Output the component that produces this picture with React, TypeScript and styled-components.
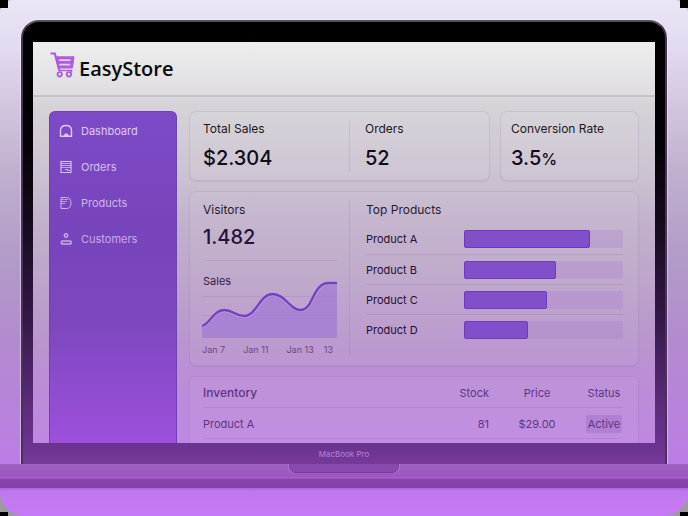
import React from "react";
import styled, { createGlobalStyle } from "styled-components";

const GlobalStyle = createGlobalStyle`
  *, *::before, *::after { box-sizing: border-box; }
  html { background: #9b9b9b; }
  body {
    margin: 0;
    font-family: Inter, "Liberation Sans", sans-serif;
    font-size: 12px;
    line-height: 16px;
    color: #17131b;
  }
  h1, h2, p, ul, dl, dd, figure { margin: 0; padding: 0; }
  ul { list-style: none; }
`;

const Stage = styled.div`
  position: relative;
  min-height: 100vh;
  padding-top: 20px;
  overflow: hidden;
  border-radius: 12px 12px 24px 24px;
  background: linear-gradient(
    #ece5f7 0px,
    #e2daee 50px,
    #d1c5de 110px,
    #bfafce 175px,
    #b29bc8 260px,
    #b38acf 340px,
    #bb7fe3 450px,
    #c077ee 490px,
    #c67af6 516px
  );
`;

const Backdrop = styled.main`
  background: #9b9b9b;
`;

const Corner = styled.span<{ $v: "top" | "bottom"; $h: "left" | "right" }>`
  position: absolute;
  ${(p) => p.$v}: 0;
  ${(p) => p.$h}: 0;
  width: 8px;
  height: ${(p) => (p.$v === "top" ? 8 : 4)}px;
  background: #000;
`;

const Lid = styled.section`
  margin: 0 21px;
  padding: 20px 10px 0;
  border: 2px solid #55505c;
  border-bottom: 0;
  border-color: #55505c #4b3058 transparent;
  border-radius: 18px 18px 0 0;
  box-shadow: 0 0 1px 1px rgba(255, 255, 255, 0.4);
  background: linear-gradient(
    #000 0px,
    #020103 110px,
    #150a1c 200px,
    #35184a 300px,
    #5b2b79 380px,
    #6c3390 424px,
    #773a9c 444px
  );
`;

const Screen = styled.div`
  height: 401px;
  display: flex;
  flex-direction: column;
  overflow: hidden;
  background: linear-gradient(
    #eeeeee 0px,
    #dfdde1 52px,
    #d6d3d8 62px,
    #cdc5d2 125px,
    #c1b0cb 185px,
    #bda6ca 235px,
    #b995cd 300px,
    #bb8cd8 350px,
    #bf88e2 401px
  );
`;

const Header = styled.header`
  flex: none;
  display: flex;
  gap: 4px;
  height: 55px;
  padding: 10px 17px 0;
  border-bottom: 2px solid #c6c4c9;
`;

const CartIcon = styled.svg`
  width: 25px;
  height: 26px;
`;

const Brand = styled.h1`
  font-family: "Open Sans", "Noto Sans", sans-serif;
  font-size: 20px;
  line-height: 34px;
  font-weight: 600;
  color: #0b0a0c;
`;

const Workspace = styled.div`
  flex: 1;
  display: grid;
  grid-template-columns: 128px minmax(0, 1fr);
  gap: 12px;
  padding: 14px 16px 0;
`;

const Sidebar = styled.nav`
  padding: 10px 9px;
  border: 1px solid #7040b8;
  border-bottom: 0;
  border-radius: 6px 6px 0 0;
  background: linear-gradient(#7e4bc8 0px, #7744bb 120px, #7d47bf 210px, #9d50dc 332px);
`;

const NavItem = styled.a<{ $dim: number }>`
  display: flex;
  align-items: center;
  gap: 8px;
  height: 18px;
  margin-bottom: 18px;
  font-size: 11px;
  color: #e0c8f5;
  opacity: ${(p) => p.$dim};
  text-decoration: none;
`;

const NavIcon = styled.svg`
  width: 14px;
  height: 14px;
  fill: none;
  stroke: currentColor;
  stroke-width: 1.2;
`;

const Content = styled.div`
  display: flex;
  flex-direction: column;
  gap: 10px;
`;

const CardRow = styled.div`
  display: grid;
  grid-template-columns: 301fr 139fr;
  gap: 10px;
`;

const Card = styled.section<{ $open?: boolean }>`
  display: flex;
  flex: ${(p) => (p.$open ? 1 : "none")};
  border: 1px solid rgba(105, 70, 130, 0.13);
  border-bottom-width: ${(p) => (p.$open ? 0 : 1)}px;
  border-radius: ${(p) => (p.$open ? "6px 6px 0 0" : "7px")};
  background: rgba(255, 255, 255, 0.05);
  box-shadow: 0 1px 1px rgba(80, 40, 110, 0.07);
`;

const Metric = styled.dl<{ $wide?: boolean }>`
  flex: ${(p) => (p.$wide ? "0 0 159px" : "1")};
  margin: 8px 0;
  padding: ${(p) => (p.$wide ? "1px 13px 0" : "1px 10px 0")};
  & + & {
    padding-left: 15px;
    border-left: 1px solid rgba(105, 70, 130, 0.13);
  }
`;

const Label = styled.dt`
  color: #1d1822;
`;

const Value = styled.dd`
  margin-top: 8px;
  font-size: 20px;
  line-height: 26px;
  font-weight: 500;
  color: #120c18;
`;

const Unit = styled.span`
  font-size: 16px;
`;

const VisitPane = styled.div`
  flex: 0 0 159px;
  margin: 8px 0 7px;
  padding: 2px 12px 0 13px;
`;

const VisitStats = styled.dl`
  height: 59px;
  border-bottom: 1px solid rgba(105, 70, 130, 0.12);
  dt { color: #281a34; }
  dd { margin-top: 6px; color: #26123a; }
`;

const ChartFigure = styled.figure`
  display: grid;
  margin: 12px 0 0 -1px;
`;

const ChartTitle = styled.figcaption`
  grid-area: 1 / 1;
  padding-left: 1px;
  font-size: 11px;
  color: #321b47;
`;

const Chart = styled.svg`
  grid-area: 1 / 1;
  width: 100%;
  height: 57px;
  margin-top: 8px;
`;

const AxisLabels = styled.div`
  display: flex;
  justify-content: space-between;
  margin: 4px 0 0 -1px;
  padding-right: 4px;
  font-size: 9px;
  color: #6b4880;
  span:last-child { margin-left: -8px; }
`;

const ProductsPane = styled.div`
  flex: 1;
  margin: 8px 0;
  padding: 2px 15px 0 16px;
  border-left: 1px solid rgba(105, 70, 130, 0.13);
`;

const PaneTitle = styled.h2`
  font-size: 12px;
  font-weight: 400;
  color: #281a34;
`;

const ProductList = styled.ul`
  padding-top: 6px;
`;

const ProductRow = styled.li`
  display: grid;
  grid-template-columns: 98px minmax(0, 1fr);
  align-items: center;
  height: 30px;
  font-size: 11px;
  color: #240f36;
  & + & { border-top: 1px solid rgba(105, 70, 130, 0.14); }
`;

const Track = styled.div`
  height: 18px;
  border-radius: 2px;
  background: rgba(160, 110, 210, 0.22);
`;

const Fill = styled.div`
  height: 100%;
  border: 1px solid #6c3cbc;
  border-radius: 2px;
  background: #814fca;
`;

const Inventory = styled.table`
  width: 100%;
  margin: 0 15px 0 13px;
  align-self: flex-start;
  border-collapse: collapse;
  table-layout: fixed;
  color: #603583;
  tr { border-bottom: 1px solid rgba(105, 50, 140, 0.12); }
`;

const Col = styled.col<{ $w?: number }>`
  width: ${(p) => (p.$w ? `${p.$w}px` : "auto")};
`;

const Head = styled.th<{ $align?: "left" | "right" | "center" }>`
  height: 30px;
  padding: 2px 0 0;
  text-align: ${(p) => p.$align ?? "center"};
  font-size: ${(p) => (p.$align === "left" ? 12 : 11)}px;
  font-weight: ${(p) => (p.$align === "left" ? 500 : 400)};
  white-space: nowrap;
`;

const Cell = styled.td<{ $align?: "left" | "right" | "center" }>`
  height: 31px;
  padding: 2px 0 0;
  text-align: ${(p) => p.$align ?? "center"};
  font-size: 11px;
  white-space: nowrap;
`;

const Badge = styled.span`
  display: inline-block;
  padding: 1px 2px;
  border-radius: 2px;
  background: rgba(130, 80, 180, 0.24);
`;

const Model = styled.p`
  padding: 6px 0 5px;
  text-align: center;
  font-size: 8px;
  line-height: 10px;
  color: #b484d2;
`;

const Deck = styled.div`
  height: 26px;
  display: flex;
  justify-content: center;
  align-items: flex-start;
  border-bottom: 2px solid #b069dc;
  background: linear-gradient(
    #a968cb 0px,
    #9f60c2 1px,
    #9c57c0 13px,
    #aa69ce 14px,
    #8a44ad 15px,
    #843fa8 24px
  );
`;

const Notch = styled.div`
  width: 110px;
  height: 9px;
  border: 1px solid #7c3d9d;
  border-top: 0;
  border-radius: 0 0 7px 7px;
  background: #8a49ad;
  box-shadow: 1px 0 0 #b27bd0, -1px 0 0 #b27bd0;
`;

const navItems = [
  {
    label: "Dashboard",
    dim: 1,
    icon: (
      <>
        <path d="M1.500 12.300V6.500C1.500 3.200 4 1.500 7 1.500s5.500 1.700 5.500 5v5.800z" strokeWidth="1.400" />
        <path d="M5 12v-1.500h1V9.500h2.500v1H9.500V12z" fill="currentColor" stroke="none" />
      </>
    ),
  },
  {
    label: "Orders",
    dim: 0.92,
    icon: (
      <>
        <path d="M2 1.500h10v11H2z" />
        <path d="M2 3.500h10M2 5.500h10M2 7.500h10M6 9.500h3M8 10.500h3" strokeWidth="0.800" />
      </>
    ),
  },
  {
    label: "Products",
    dim: 0.84,
    icon: (
      <>
        <path d="M2 12.500v-11h5.500c3 0 4.500 2.200 4.500 5.500s-1.500 5.500-4.500 5.500z" strokeWidth="1" />
        <path d="M2 3.500h7M2 5.500h6M2 7.500h4" strokeWidth="0.800" />
      </>
    ),
  },
  {
    label: "Customers",
    dim: 0.78,
    icon: (
      <>
        <circle cx="7" cy="3.500" r="1.700" strokeWidth="1.500" />
        <rect x="2.500" y="9" width="9.500" height="3" rx="1" strokeWidth="1.700" />
      </>
    ),
  },
];

const products = [
  { name: "Product A", share: 79 },
  { name: "Product B", share: 58 },
  { name: "Product C", share: 52 },
  { name: "Product D", share: 40 },
];

const curve =
  "M0 45C8 43 11 29 22 29C31 29 33 35 42 35C54 35 57 13 70 13C83 13 87 29 98 29C111 29 109 2 126 2L134 2";

export default function App() {
  return (
    <Backdrop>
      <GlobalStyle />
      <Stage>
        <Lid>
          <Screen>
            <Header>
              <CartIcon viewBox="0 0 25 26" fill="none" stroke="#ad5be0" aria-hidden="true">
                <path d="M0.500 1.500h4.300l4.500 17" strokeWidth="2.200" />
                <path d="M5.500 4.800h18.500L22.500 16H8.500z" fill="#ad5be0" strokeWidth="1" strokeLinejoin="round" />
                <path d="M9.500 8.200h10.500M10 12.700h9.500" stroke="#e4cdf2" strokeWidth="1.700" strokeLinecap="round" />
                <path d="M9 18.500h12.500v2" strokeWidth="1.500" />
                <circle cx="9.700" cy="22.300" r="2.200" strokeWidth="1.800" />
                <circle cx="18.900" cy="22.300" r="2.200" strokeWidth="1.800" />
              </CartIcon>
              <Brand>EasyStore</Brand>
            </Header>
            <Workspace>
              <Sidebar aria-label="Main">
                <ul>
                  {navItems.map((item) => (
                    <li key={item.label}>
                      <NavItem href="#" $dim={item.dim}>
                        <NavIcon viewBox="0 0 14 14" aria-hidden="true">
                          {item.icon}
                        </NavIcon>
                        {item.label}
                      </NavItem>
                    </li>
                  ))}
                </ul>
              </Sidebar>
              <Content>
                <CardRow>
                  <Card>
                    <Metric $wide>
                      <Label>Total Sales</Label>
                      <Value>$2.304</Value>
                    </Metric>
                    <Metric>
                      <Label>Orders</Label>
                      <Value>52</Value>
                    </Metric>
                  </Card>
                  <Card>
                    <Metric>
                      <Label>Conversion Rate</Label>
                      <Value>
                        3.5<Unit>%</Unit>
                      </Value>
                    </Metric>
                  </Card>
                </CardRow>
                <Card>
                  <VisitPane>
                    <VisitStats>
                      <Label>Visitors</Label>
                      <Value>1.482</Value>
                    </VisitStats>
                    <ChartFigure>
                      <ChartTitle>Sales</ChartTitle>
                      <Chart viewBox="0 0 134 57" preserveAspectRatio="none" aria-hidden="true">
                        <path d="M0 15.500h134M0 34.500h134" stroke="#69468222" />
                        <path d={`${curve}V57H0z`} fill="#a27ad4" fillOpacity="0.75" />
                        <path d={curve} fill="none" stroke="#cbb0e2" strokeWidth="4" strokeOpacity="0.500" />
                        <path d={curve} fill="none" stroke="#7440bd" strokeWidth="2.300" />
                      </Chart>
                    </ChartFigure>
                    <AxisLabels>
                      <span>Jan 7</span>
                      <span>Jan 11</span>
                      <span>Jan 13</span>
                      <span>13</span>
                    </AxisLabels>
                  </VisitPane>
                  <ProductsPane>
                    <PaneTitle>Top Products</PaneTitle>
                    <ProductList>
                      {products.map((p) => (
                        <ProductRow key={p.name}>
                          {p.name}
                          <Track>
                            <Fill style={{ width: `${p.share}%` }} />
                          </Track>
                        </ProductRow>
                      ))}
                    </ProductList>
                  </ProductsPane>
                </Card>
                <Card $open>
                  <Inventory>
                    <colgroup>
                      <Col />
                      <Col $w={60} />
                      <Col $w={96} />
                      <Col $w={38} />
                    </colgroup>
                    <thead>
                      <tr>
                        <Head $align="left">Inventory</Head>
                        <Head $align="right">Stock</Head>
                        <Head>Price</Head>
                        <Head>Status</Head>
                      </tr>
                    </thead>
                    <tbody>
                      <tr>
                        <Cell $align="left">Product A</Cell>
                        <Cell $align="right">81</Cell>
                        <Cell>$29.00</Cell>
                        <Cell>
                          <Badge>Active</Badge>
                        </Cell>
                      </tr>
                    </tbody>
                  </Inventory>
                </Card>
              </Content>
            </Workspace>
          </Screen>
          <Model>MacBook Pro</Model>
        </Lid>
        <Deck>
          <Notch />
        </Deck>
      </Stage>
      <Corner $v="top" $h="left" />
      <Corner $v="top" $h="right" />
      <Corner $v="bottom" $h="left" />
      <Corner $v="bottom" $h="right" />
    </Backdrop>
  );
}
